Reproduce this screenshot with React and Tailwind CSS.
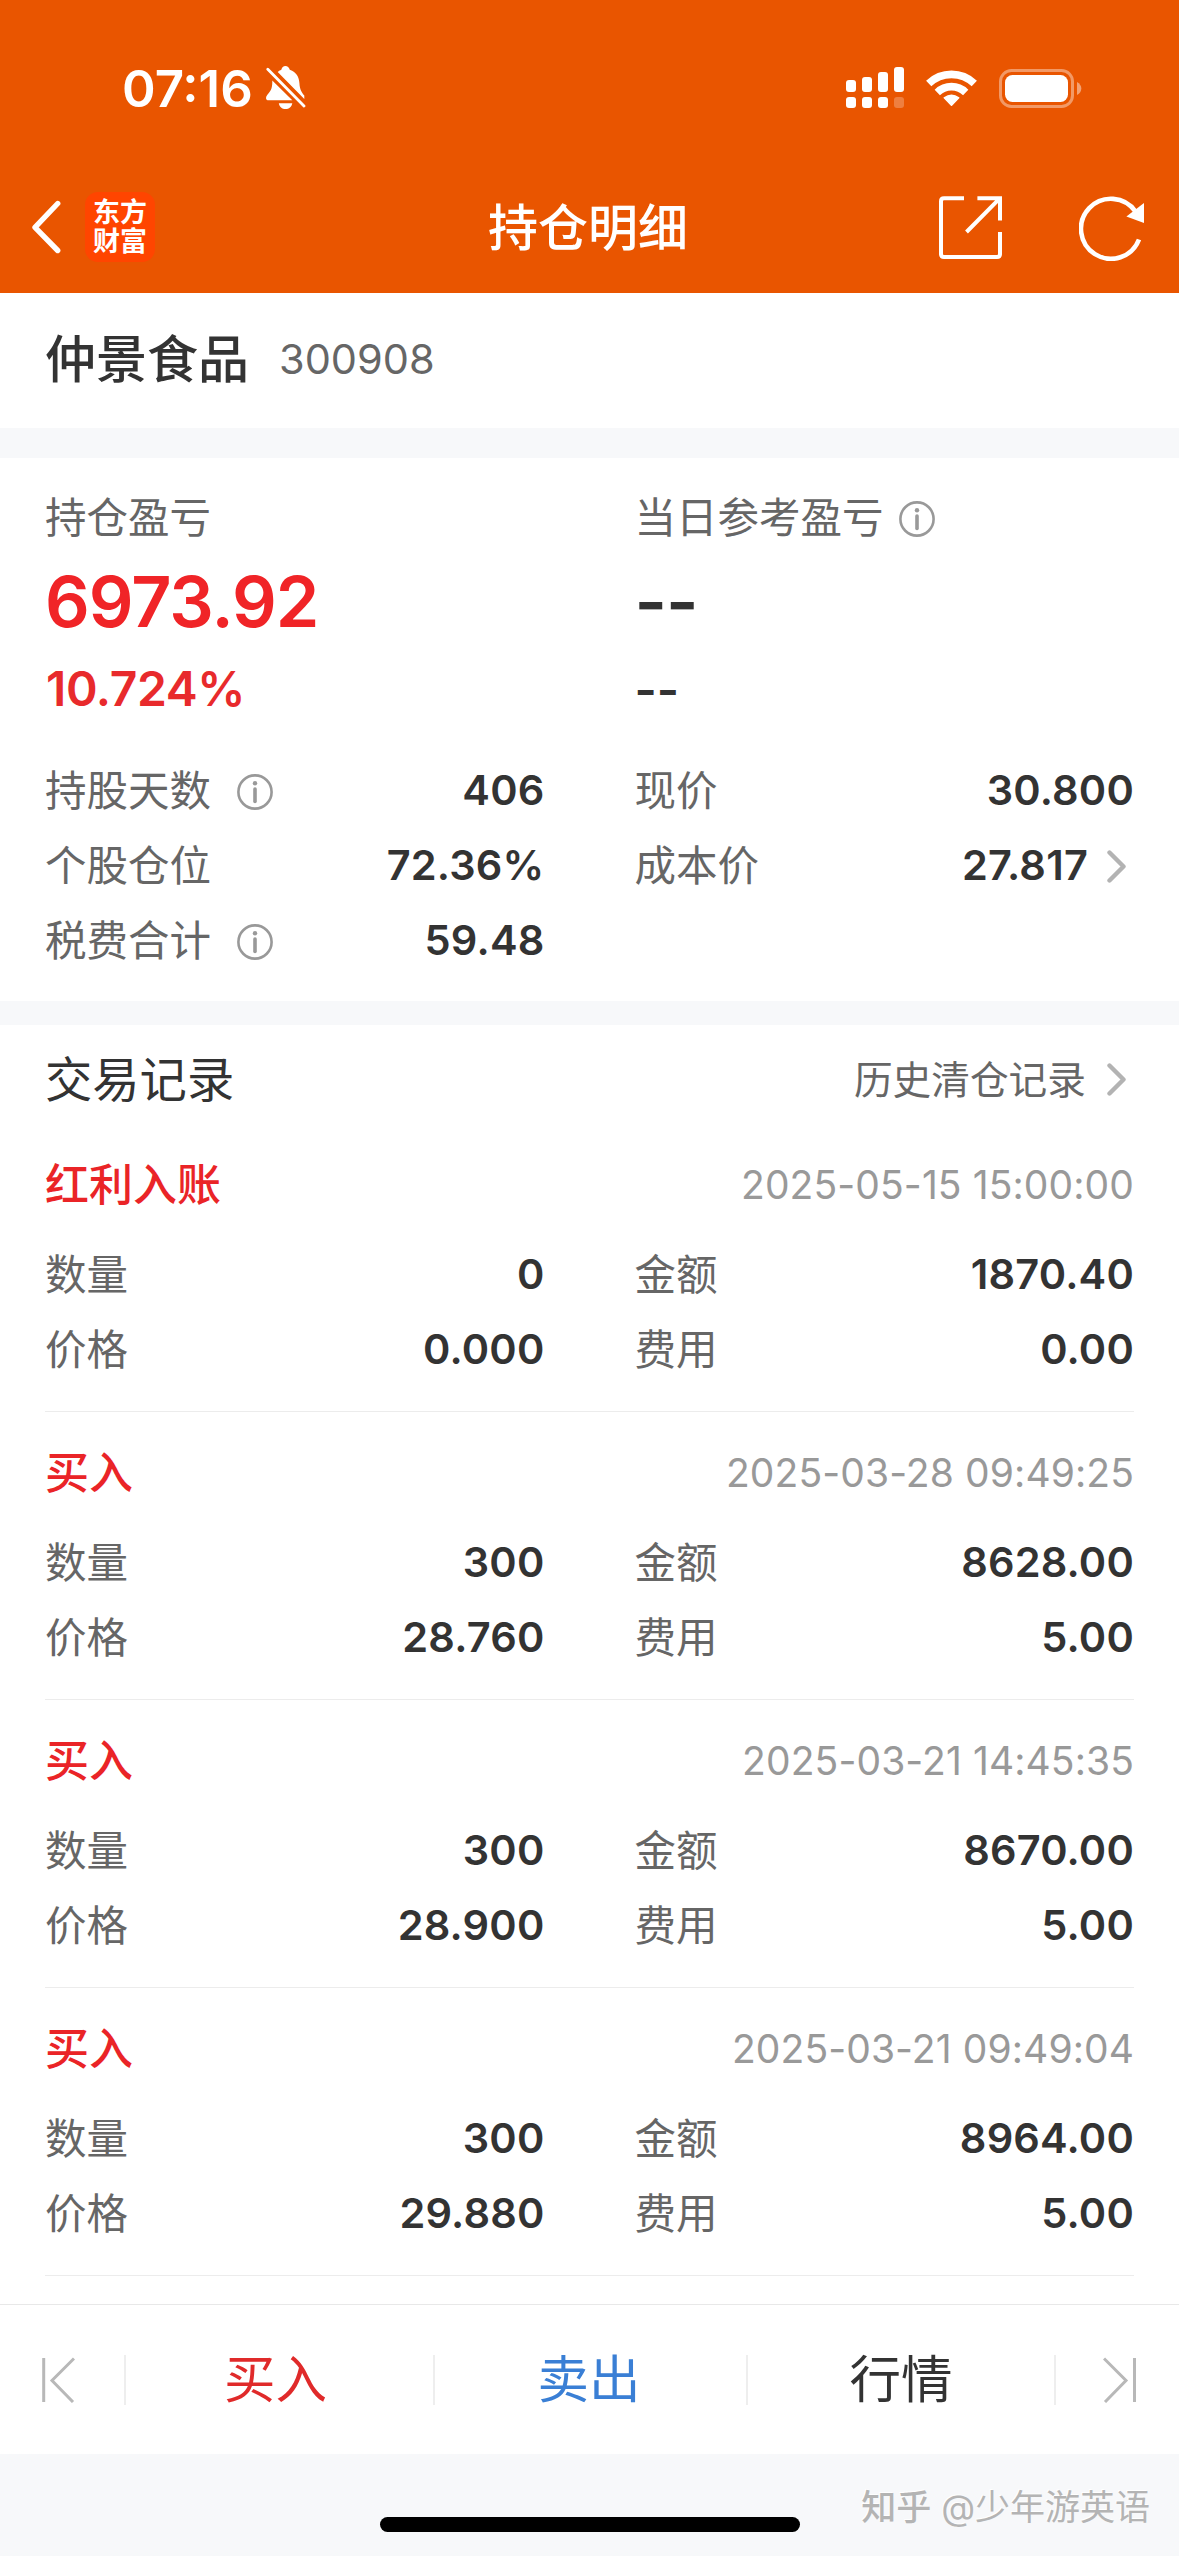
const summaryLeft = [
    { label: "持股天数", value: "406", info: true },
    { label: "个股仓位", value: "72.36%" },
    { label: "税费合计", value: "59.48", info: true },
];

const summaryRight = [
    { label: "现价", value: "30.800" },
    { label: "成本价", value: "27.817", arrow: true },
];

const records = [
    { type: "红利入账", time: "2025-05-15 15:00:00", count: "0", price: "0.000", amount: "1870.40", fee: "0.00" },
    { type: "买入", time: "2025-03-28 09:49:25", count: "300", price: "28.760", amount: "8628.00", fee: "5.00" },
    { type: "买入", time: "2025-03-21 14:45:35", count: "300", price: "28.900", amount: "8670.00", fee: "5.00" },
    { type: "买入", time: "2025-03-21 09:49:04", count: "300", price: "29.880", amount: "8964.00", fee: "5.00" },
];

const InfoIcon = () => (
    <svg width="36" height="36" viewBox="0 0 36 36" fill="none" stroke="#999">
        <circle cx="18" cy="18" r="16.6" strokeWidth="2.6" />
        <circle cx="18" cy="9.2" r="2.2" fill="#999" stroke="none" />
        <path d="M18 15v12.5" strokeWidth="3.6" strokeLinecap="round" />
    </svg>
);

const ArrowRight = () => (
    <svg width="20" height="33" viewBox="0 0 20 33" fill="none" stroke="#b3b3b3" strokeWidth="4.4" strokeLinecap="round" strokeLinejoin="round">
        <path d="M2.5 2.5L16.5 16.5L2.5 30.5" />
    </svg>
);

// 状态栏
const StatusBar = () => (
    <div className="flex h-[176px] items-center justify-between pl-[122px] pr-[97px]">
        <div className="flex items-center">
            <span className="w-[144px] text-[51px] leading-none font-semibold whitespace-nowrap">07:16</span>
            <svg width="40" height="44" viewBox="0 0 40 44" fill="#fff">
                <path d="M11.7 6C13 4.8 14.2 4.3 15.3 3.8C16.2 1.2 17.2 0 19.4 0C21.6 0 22.8 1.2 23.8 3.8C30.5 6.3 33 11 33.4 17C33.8 24 35.8 26.5 38.3 29.5V33Z" />
                <path d="M6.3 14.5L26.3 34.3H2.6C-0.2 34.3 -0.8 31.5 1.2 29C4.2 25.5 6.5 23.5 6.3 14.5Z" />
                <path d="M12.8 37.2H26.3C25.6 41 23 43 19.5 43C16 43 13.5 41 12.8 37.2Z" />
                <path d="M3.2 1.8L39.4 38.6" stroke="#e95500" strokeWidth="2.4" />
                <path d="M1.8 3.2L38 40" stroke="#fff" strokeWidth="2.8" strokeLinecap="round" />
            </svg>
        </div>
        <div className="flex items-center">
            <svg width="58" height="42" viewBox="0 0 58 42" fill="#fff">
                <rect x="0" y="13" width="10" height="12" rx="3" />
                <rect x="16" y="10" width="10" height="15" rx="3" />
                <rect x="32" y="5" width="10" height="20" rx="3" />
                <rect x="48" y="0" width="10" height="25" rx="3" />
                <rect x="0" y="30" width="10" height="11" rx="3" />
                <rect x="16" y="30" width="10" height="11" rx="3" />
                <rect x="32" y="30" width="10" height="11" rx="3" />
                <rect x="48" y="30" width="10" height="11" rx="3" opacity="0.25" />
            </svg>
            <svg className="ml-[22px]" width="51" height="38" viewBox="0 0 51 38" fill="none" stroke="#fff" strokeWidth="7.6">
                <path d="M2.7 14.5A33 33 0 0 1 48.3 14.5" />
                <path d="M11.3 23.4A20.4 20.4 0 0 1 39.7 23.4" />
                <path d="M25.5 36.2L18.3 28.8Q25.5 23.6 32.7 28.8Z" fill="#fff" strokeWidth="1.6" strokeLinejoin="round" />
            </svg>
            <svg className="ml-[22px]" width="83" height="39" viewBox="0 0 83 39">
                <rect x="1.5" y="1.5" width="72" height="36" rx="11" fill="none" stroke="#fff" strokeOpacity="0.4" strokeWidth="3" />
                <rect x="6" y="6" width="63" height="27" rx="7.5" fill="#fff" />
                <path d="M78 13Q82.3 15.5 82.3 19.5Q82.3 23.5 78 26Z" fill="#fff" fillOpacity="0.45" />
            </svg>
        </div>
    </div>
);

// 顶部导航
const NavBar = () => (
    <div className="grid h-[117px] grid-cols-3 items-start pt-[13px] pr-[34px] pl-[31px]">
        <div className="flex h-[76px] items-center">
            <svg width="30" height="54" viewBox="0 0 30 54" fill="none" stroke="#fff" strokeWidth="5.4" strokeLinecap="round" strokeLinejoin="round">
                <path d="M26.7 3.5L4 27.3L26.7 50.5" />
            </svg>
            <div className="ml-[24px] flex size-[70px] flex-col items-center justify-center rounded-[13px] bg-[#ff4500] text-[27px] leading-[29px] font-bold">
                <span>东方</span>
                <span>财富</span>
            </div>
        </div>
        <h1 className="flex h-[76px] items-center justify-center pt-[2px] text-[50px] leading-none font-medium">持仓明细</h1>
        <div className="flex h-[76px] items-center justify-end pt-[2px]">
            <svg width="64" height="64" viewBox="0 0 64 64" fill="none" stroke="#fff" strokeWidth="4">
                <path d="M25 2.2H5Q2 2.2 2 5.2V58Q2 61 5 61H58Q61 61 61 58V36" />
                <path d="M38.4 2.2H61V24.5M61 2.2L27.5 36" />
            </svg>
            <svg className="ml-[76px]" width="66" height="66" viewBox="0 0 66 66" fill="none">
                <path d="M60 44.5A30 30 0 1 1 56.5 16.5" stroke="#fff" strokeWidth="4.6" />
                <path d="M65 8V28L47.4 21.5Z" fill="#fff" />
            </svg>
        </div>
    </div>
);

const Row = ({ label, value, info, arrow }) => (
    <div className="flex h-[75px] items-center text-[41.5px] leading-none">
        <span className="text-[#666]">{label}</span>
        {info && <span className="ml-[26px]"><InfoIcon /></span>}
        <span className="ml-auto pb-px font-semibold tracking-[0.2px] text-[#333]">{value}</span>
        {arrow && <span className="mr-[7px] ml-[19px]"><ArrowRight /></span>}
    </div>
);

const Record = ({ item }) => (
    <div className="h-[288px] border-b border-[#ececec] pt-[20px]">
        <div className="flex h-[82px] items-center justify-between leading-none">
            <span className="text-[44px] font-medium text-[#ea2427]">{item.type}</span>
            <span className="pb-[2px] text-[39px] tracking-[0.1px] text-[#999]">{item.time}</span>
        </div>
        <div className="mt-[12px] grid grid-cols-2 gap-x-[90px]">
            <Row label="数量" value={item.count} />
            <Row label="金额" value={item.amount} />
            <Row label="价格" value={item.price} />
            <Row label="费用" value={item.fee} />
        </div>
    </div>
);

const Divider = () => <div className="h-[50px] w-[2px] bg-[#eee]" />;

// 底部操作栏
const BottomBar = () => (
    <div className="flex h-[150px] items-center border-t border-[#e8e8e8] text-[51.5px] leading-none">
        <div className="flex w-[124px] pl-[41px]">
            <svg width="34" height="46" viewBox="0 0 34 46" fill="none" stroke="#b8b8b8" strokeWidth="3">
                <path d="M2.7 1V45M33 1.5L11 23.5L32 45" />
            </svg>
        </div>
        <Divider />
        <span className="w-[307px] pr-[8px] text-center text-[#e02a2a]">买入</span>
        <Divider />
        <span className="w-[311px] pr-[3px] text-center text-[#3a7fd5]">卖出</span>
        <Divider />
        <span className="flex-1 text-center text-[#333]">行情</span>
        <Divider />
        <div className="flex w-[123px] justify-end pr-[42px]">
            <svg width="34" height="46" viewBox="0 0 34 46" fill="none" stroke="#b8b8b8" strokeWidth="3">
                <path d="M31.5 1V45M1 1.5L23 23.5L2 45" />
            </svg>
        </div>
    </div>
);

const App = () => {
    return (
        <div className="flex h-[2556px] w-[1179px] flex-col overflow-hidden bg-white font-[Inter,'Noto_Sans_CJK_SC',sans-serif]">
            <header className="bg-[#e95500] text-white">
                <StatusBar />
                <NavBar />
            </header>

            <section className="flex h-[135px] items-center pb-[2px] pl-[45px] leading-none">
                <span className="text-[51px] font-medium text-[#333]">仲景食品</span>
                <span className="ml-[30px] text-[41.5px] text-[#666]">300908</span>
            </section>

            <div className="h-[30px] bg-[#f7f8fa]" />

            <section className="grid h-[543px] grid-cols-2 gap-x-[90px] pt-[30px] pr-[45px] pl-[45px] leading-none">
                <div>
                    <div className="flex h-[60px] items-center pt-[2px] text-[41.5px] text-[#666]">持仓盈亏</div>
                    <div className="flex h-[107px] items-center text-[70px] font-semibold tracking-[-1px] text-[#f02427]">6973.92</div>
                    <div className="mb-[32px] flex h-[67px] items-center pl-px text-[48px] font-semibold tracking-[-0.4px] text-[#e82a2c]">10.724%</div>
                    {summaryLeft.map((row) => <Row key={row.label} {...row} />)}
                </div>
                <div>
                    <div className="flex h-[60px] items-center pt-[2px] text-[41.5px] text-[#666]">
                        当日参考盈亏
                        <span className="ml-[15px]"><InfoIcon /></span>
                    </div>
                    <div className="flex h-[107px] items-center text-[70px] font-semibold tracking-[-1px] text-[#333]">--</div>
                    <div className="mb-[32px] flex h-[67px] items-center pt-[2px] text-[48px] font-semibold text-[#333]">--</div>
                    {summaryRight.map((row) => <Row key={row.label} {...row} />)}
                </div>
            </section>

            <div className="h-[24px] bg-[#f7f8fa]" />

            <section className="h-[1279px] pr-[45px] pl-[45px] leading-none">
                <div className="flex h-[99px] items-center justify-between pt-[11px]">
                    <span className="text-[47.3px] text-[#333]">交易记录</span>
                    <span className="flex items-center text-[38.7px] text-[#666]">
                        历史清仓记录
                        <span className="mr-[7px] ml-[21px]"><ArrowRight /></span>
                    </span>
                </div>
                {records.map((item) => <Record key={item.time} item={item} />)}
            </section>

            <BottomBar />

            <footer className="relative h-[102px] bg-[#f7f8fa] pt-[63px]">
                <div className="mx-auto h-[15px] w-[420px] rounded-full bg-black" />
                {/* 水印 */}
                <div className="absolute top-[36px] right-[29px] text-[35px] leading-none whitespace-nowrap text-[#b4b4b4] [text-shadow:-1px_-1px_0_#fff]">
                    <span className="font-medium">知乎</span> @少年游英语
                </div>
            </footer>
        </div>
    );
};

export default App;
